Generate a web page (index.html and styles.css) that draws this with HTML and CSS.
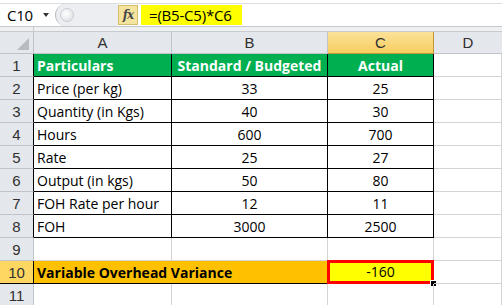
FILE: index.html
```html
<!DOCTYPE html>
<html>
<head>
<meta charset="utf-8">
<link rel="stylesheet" href="styles.css">
</head>
<body>
<div class="app">
  <div class="fbar">
    <div class="namebox"><span class="ref">C10</span><span class="caret"></span></div>
    <div class="grip"><span class="knob"></span></div>
    <div class="fxbtn"><span class="fx">fx</span></div>
    <div class="input"><span class="formula">=(B5-C5)*C6</span></div>
  </div>
  <div class="gap"><span class="gapcell"></span></div>
  <div class="sheet">
    <div class="corner"><svg width="12" height="12" viewBox="0 0 12 12"><polygon points="12,0 12,12 0,12" fill="#b7bcc3"/></svg></div>
    <div class="ch">A</div>
    <div class="ch">B</div>
    <div class="ch ch-sel">C</div>
    <div class="ch ch-last">D</div>

    <div class="rh rh-b">1</div>
    <div class="c g bl">Particulars</div>
    <div class="c g ctr bl">Standard / Budgeted</div>
    <div class="c g ctr bl">Actual</div>
    <div class="c e"></div>

    <div class="rh rh-b">2</div>
    <div class="c bl">Price (per kg)</div>
    <div class="c ctr bl">33</div>
    <div class="c ctr bl">25</div>
    <div class="c e"></div>

    <div class="rh rh-b">3</div>
    <div class="c bl">Quantity (in Kgs)</div>
    <div class="c ctr bl">40</div>
    <div class="c ctr bl">30</div>
    <div class="c e"></div>

    <div class="rh rh-b">4</div>
    <div class="c bl">Hours</div>
    <div class="c ctr bl">600</div>
    <div class="c ctr bl">700</div>
    <div class="c e"></div>

    <div class="rh rh-b">5</div>
    <div class="c bl">Rate</div>
    <div class="c ctr bl">25</div>
    <div class="c ctr bl">27</div>
    <div class="c e"></div>

    <div class="rh rh-b">6</div>
    <div class="c bl">Output (in kgs)</div>
    <div class="c ctr bl">50</div>
    <div class="c ctr bl">80</div>
    <div class="c e"></div>

    <div class="rh rh-b">7</div>
    <div class="c bl">FOH Rate per hour</div>
    <div class="c ctr bl">12</div>
    <div class="c ctr bl">11</div>
    <div class="c e"></div>

    <div class="rh rh-b">8</div>
    <div class="c bl">FOH</div>
    <div class="c ctr bl">3000</div>
    <div class="c ctr bl">2500</div>
    <div class="c e"></div>

    <div class="rh">9</div>
    <div class="c e"></div>
    <div class="c e"></div>
    <div class="c e"></div>
    <div class="c e"></div>

    <div class="rh rh-sel">10</div>
    <div class="c o span2">Variable Overhead Variance</div>
    <div class="c y ctr">-160<span class="handle"></span></div>
    <div class="c e"></div>

    <div class="rh">11</div>
    <div class="c e"></div>
    <div class="c e"></div>
    <div class="c e"></div>
    <div class="c e"></div>
  </div>
</div>
</body>
</html>
```

FILE: styles.css
```css
html, body {
  margin: 0;
  padding: 0;
  background: #ffffff;
}

.app {
  width: 502px;
  height: 305px;
  overflow: hidden;
  font-family: "Open Sans", "Liberation Sans", sans-serif;
  font-size: 14px;
  color: #000;
}

/* formula bar */
.fbar {
  height: 22px;
  margin-top: 3px;
  display: flex;
  background: #fff;
  border-top: 1px solid #dadde1;
  border-bottom: 1px solid #c4c8cd;
}

.namebox {
  width: 55px;
  display: flex;
  align-items: center;
  padding-left: 7px;
  box-sizing: border-box;
}

.ref {
  font-size: 15px;
  color: #000;
  letter-spacing: -0.3px;
}

.caret {
  margin-left: 10px;
  width: 0;
  height: 0;
  border-left: 3.5px solid transparent;
  border-right: 3.5px solid transparent;
  border-top: 4px solid #333;
}

.grip {
  width: 63px;
  background: #eceef1;
  border-left: 1px solid #b9bec4;
  border-radius: 11px 0 0 11px;
  display: flex;
  align-items: center;
  padding-left: 4px;
  box-sizing: border-box;
}

.knob {
  width: 12px;
  height: 12px;
  border-radius: 50%;
  background: radial-gradient(circle at 40% 40%, #ffffff, #d7dadf);
  border: 1px solid #c9cdd2;
}

.fxbtn {
  width: 20px;
  margin: 1px 0 1px 0;
  background: #f5e49d;
  border: 1px solid #d2bd6c;
  box-sizing: border-box;
  display: flex;
  align-items: center;
  justify-content: center;
}

.fx {
  font-family: "DejaVu Serif", "Liberation Serif", serif;
  font-style: italic;
  font-weight: bold;
  font-size: 12px;
  color: #4a4a4a;
  letter-spacing: -1px;
}

.input {
  flex: 1;
  display: flex;
  align-items: center;
  padding-left: 3px;
}

.formula {
  background: #ffff00;
  height: 20px;
  line-height: 20px;
  padding: 0 10px 0 8px;
  font-size: 15px;
  letter-spacing: -0.2px;
}

.gap {
  height: 4px;
  background: #eff0f2;
  border-bottom: 1px solid #c7cbd0;
  display: flex;
}

.gapcell {
  width: 33px;
  border-right: 1px solid #c7cbd0;
}

/* sheet grid */
.sheet {
  display: grid;
  grid-template-columns: 34px 138px 156px 106px 1fr;
  grid-template-rows: 22px repeat(11, 23px);
}

.corner {
  background: #e4e7eb;
  border-right: 1px solid #bfc4ca;
  border-bottom: 1px solid #bfc4ca;
  display: flex;
  align-items: flex-end;
  justify-content: flex-end;
  padding: 0 4px 3px 0;
  box-sizing: border-box;
}

.ch {
  background: #e4e7eb;
  border-right: 1px solid #bfc4ca;
  border-bottom: 1px solid #bfc4ca;
  color: #303030;
  font-family: "Liberation Sans", sans-serif;
  font-size: 15px;
  display: flex;
  align-items: center;
  justify-content: center;
  box-sizing: border-box;
}

.ch-sel {
  background: linear-gradient(#fbe29a, #f7cd5e);
  border-right: 1px solid #c2973a;
  border-bottom: 1px solid #c2973a;
}

.ch-last {
  border-right: none;
}

.rh {
  background: #e4e7eb;
  border-right: 1px solid #bfc4ca;
  border-bottom: 1px solid #bfc4ca;
  color: #303030;
  font-family: "Liberation Sans", sans-serif;
  font-size: 15px;
  display: flex;
  align-items: center;
  justify-content: center;
  box-sizing: border-box;
}

.rh-b {
  border-right-color: #000;
}

.rh-sel {
  background: #fed763;
  border-right: 1px solid #000;
  border-bottom: 1px solid #000;
}

.c {
  border-right: 1px solid #d4d4d4;
  border-bottom: 1px solid #d4d4d4;
  box-sizing: border-box;
  display: flex;
  align-items: flex-end;
  padding: 0 0 1px 3px;
  white-space: nowrap;
  position: relative;
}

.ctr {
  justify-content: center;
  padding-left: 0;
}

.bl {
  border-right-color: #000;
  border-bottom-color: #000;
}

.g {
  background: #00b050;
  color: #fff;
  font-weight: bold;
}

.o {
  background: #ffc000;
  font-weight: bold;
  border-right-color: #000;
  border-bottom-color: #000;
}

.span2 {
  grid-column: span 2;
}

.y {
  background: #ffff00;
  border: 3px solid #ff0000;
  margin: -1px 0 0 -1px;
  padding-bottom: 0;
}

.handle {
  position: absolute;
  right: -5px;
  bottom: -5px;
  width: 5px;
  height: 5px;
  background: #000;
  border: 1px solid #fff;
  border-width: 1px 0 0 1px;
}
```
